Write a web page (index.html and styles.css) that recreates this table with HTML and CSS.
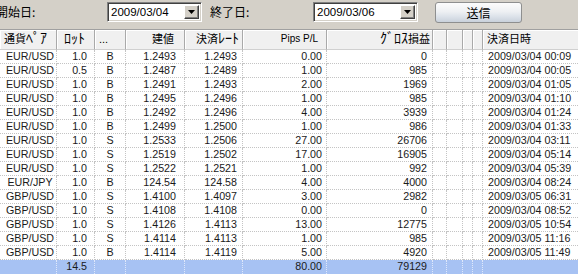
FILE: index.html
```html
<!DOCTYPE html>
<html lang="ja">
<head>
<meta charset="utf-8">
<link rel="stylesheet" href="styles.css">
</head>
<body>
<div class="toolbar">
  <span class="label start">開始日:</span>
  <div class="combo c1"><span class="val">2009/03/04</span><span class="drop"><svg width="7" height="4" viewBox="0 0 7 4"><path d="M0 0H7L3.5 4Z" fill="#000"/></svg></span></div>
  <span class="label end">終了日:</span>
  <div class="combo c2"><span class="val">2009/03/06</span><span class="drop"><svg width="7" height="4" viewBox="0 0 7 4"><path d="M0 0H7L3.5 4Z" fill="#000"/></svg></span></div>
  <button class="send">送信</button>
</div>
<div class="grid">
  <div class="row head">
    <div class="h l">通貨<span class="hk">ﾍﾟｱ</span></div><div class="h l2"><span class="hk">ﾛｯﾄ</span></div><div class="h l">...</div><div class="h r r-open">建値</div><div class="h r r-close">決済<span class="hk">ﾚｰﾄ</span></div><div class="h r r-pips">Pips P/L</div><div class="h r r-gross"><span class="hk">ｸﾞﾛｽ</span>損益</div><div class="h"></div><div class="h"></div><div class="h"></div><div class="h"></div><div class="h l">決済日時</div>
  </div>
  <div class="row"><div class="c pair">EUR/USD</div><div class="c lot">1.0</div><div class="c side">B</div><div class="c open">1.2493</div><div class="c close">1.2493</div><div class="c pips">0.00</div><div class="c gross">0</div><div class="c"></div><div class="c"></div><div class="c"></div><div class="c"></div><div class="c date">2009/03/04 00:09</div></div>
  <div class="row"><div class="c pair">EUR/USD</div><div class="c lot">0.5</div><div class="c side">B</div><div class="c open">1.2487</div><div class="c close">1.2489</div><div class="c pips">1.00</div><div class="c gross">985</div><div class="c"></div><div class="c"></div><div class="c"></div><div class="c"></div><div class="c date">2009/03/04 00:05</div></div>
  <div class="row"><div class="c pair">EUR/USD</div><div class="c lot">1.0</div><div class="c side">B</div><div class="c open">1.2491</div><div class="c close">1.2493</div><div class="c pips">2.00</div><div class="c gross">1969</div><div class="c"></div><div class="c"></div><div class="c"></div><div class="c"></div><div class="c date">2009/03/04 01:05</div></div>
  <div class="row"><div class="c pair">EUR/USD</div><div class="c lot">1.0</div><div class="c side">B</div><div class="c open">1.2495</div><div class="c close">1.2496</div><div class="c pips">1.00</div><div class="c gross">985</div><div class="c"></div><div class="c"></div><div class="c"></div><div class="c"></div><div class="c date">2009/03/04 01:10</div></div>
  <div class="row"><div class="c pair">EUR/USD</div><div class="c lot">1.0</div><div class="c side">B</div><div class="c open">1.2492</div><div class="c close">1.2496</div><div class="c pips">4.00</div><div class="c gross">3939</div><div class="c"></div><div class="c"></div><div class="c"></div><div class="c"></div><div class="c date">2009/03/04 01:24</div></div>
  <div class="row"><div class="c pair">EUR/USD</div><div class="c lot">1.0</div><div class="c side">B</div><div class="c open">1.2499</div><div class="c close">1.2500</div><div class="c pips">1.00</div><div class="c gross">986</div><div class="c"></div><div class="c"></div><div class="c"></div><div class="c"></div><div class="c date">2009/03/04 01:33</div></div>
  <div class="row"><div class="c pair">EUR/USD</div><div class="c lot">1.0</div><div class="c side">S</div><div class="c open">1.2533</div><div class="c close">1.2506</div><div class="c pips">27.00</div><div class="c gross">26706</div><div class="c"></div><div class="c"></div><div class="c"></div><div class="c"></div><div class="c date">2009/03/04 03:11</div></div>
  <div class="row"><div class="c pair">EUR/USD</div><div class="c lot">1.0</div><div class="c side">S</div><div class="c open">1.2519</div><div class="c close">1.2502</div><div class="c pips">17.00</div><div class="c gross">16905</div><div class="c"></div><div class="c"></div><div class="c"></div><div class="c"></div><div class="c date">2009/03/04 05:14</div></div>
  <div class="row"><div class="c pair">EUR/USD</div><div class="c lot">1.0</div><div class="c side">S</div><div class="c open">1.2522</div><div class="c close">1.2521</div><div class="c pips">1.00</div><div class="c gross">992</div><div class="c"></div><div class="c"></div><div class="c"></div><div class="c"></div><div class="c date">2009/03/04 05:39</div></div>
  <div class="row"><div class="c pair">EUR/JPY</div><div class="c lot">1.0</div><div class="c side">B</div><div class="c open">124.54</div><div class="c close">124.58</div><div class="c pips">4.00</div><div class="c gross">4000</div><div class="c"></div><div class="c"></div><div class="c"></div><div class="c"></div><div class="c date">2009/03/04 08:24</div></div>
  <div class="row"><div class="c pair">GBP/USD</div><div class="c lot">1.0</div><div class="c side">S</div><div class="c open">1.4100</div><div class="c close">1.4097</div><div class="c pips">3.00</div><div class="c gross">2982</div><div class="c"></div><div class="c"></div><div class="c"></div><div class="c"></div><div class="c date">2009/03/05 06:31</div></div>
  <div class="row"><div class="c pair">GBP/USD</div><div class="c lot">1.0</div><div class="c side">S</div><div class="c open">1.4108</div><div class="c close">1.4108</div><div class="c pips">0.00</div><div class="c gross">0</div><div class="c"></div><div class="c"></div><div class="c"></div><div class="c"></div><div class="c date">2009/03/04 08:52</div></div>
  <div class="row"><div class="c pair">GBP/USD</div><div class="c lot">1.0</div><div class="c side">S</div><div class="c open">1.4126</div><div class="c close">1.4113</div><div class="c pips">13.00</div><div class="c gross">12775</div><div class="c"></div><div class="c"></div><div class="c"></div><div class="c"></div><div class="c date">2009/03/05 10:54</div></div>
  <div class="row"><div class="c pair">GBP/USD</div><div class="c lot">1.0</div><div class="c side">S</div><div class="c open">1.4114</div><div class="c close">1.4113</div><div class="c pips">1.00</div><div class="c gross">985</div><div class="c"></div><div class="c"></div><div class="c"></div><div class="c"></div><div class="c date">2009/03/05 11:16</div></div>
  <div class="row"><div class="c pair">GBP/USD</div><div class="c lot">1.0</div><div class="c side">B</div><div class="c open">1.4114</div><div class="c close">1.4119</div><div class="c pips">5.00</div><div class="c gross">4920</div><div class="c"></div><div class="c"></div><div class="c"></div><div class="c"></div><div class="c date">2009/03/05 11:49</div></div>
  <div class="row total"><div class="c pair"></div><div class="c lot">14.5</div><div class="c side"></div><div class="c open"></div><div class="c close"></div><div class="c pips">80.00</div><div class="c gross">79129</div><div class="c"></div><div class="c"></div><div class="c"></div><div class="c"></div><div class="c date"></div></div>
</div>
</body>
</html>
```

FILE: styles.css
```css
* { box-sizing: border-box; }
html, body { margin: 0; padding: 0; }
body {
  width: 578px;
  height: 277px;
  overflow: hidden;
  background: #fff;
  font-family: "Liberation Sans", Arial, "Noto Sans CJK JP", sans-serif;
  color: #111;
}
.toolbar {
  display: flex;
  align-items: flex-start;
  height: 30px;
  background: #d4d0c8;
  border-bottom: 1px solid #a0a0a0;
}
.label {
  font-family: "Noto Sans CJK JP", sans-serif;
  font-size: 12px;
  line-height: 14px;
  margin-top: 5px;
  color: #000;
}
.label.start { margin-left: -4px; width: 111px; }
.label.end { margin-left: 8px; width: 103px; }
.combo {
  display: flex;
  align-items: stretch;
  height: 20px;
  margin-top: 2px;
  background: #fff;
  border: 1px solid;
  border-color: #808080 #fff #fff #808080;
  box-shadow: inset 1px 1px 0 #404040, inset -1px -1px 0 #d4d0c8;
  padding: 2px;
}
.c1 { width: 95px; }
.c2 { width: 105px; }
.val {
  flex: 1;
  font-size: 11.5px;
  line-height: 14px;
  padding-left: 1px;
  color: #000;
}
.drop {
  width: 15px;
  display: flex;
  align-items: center;
  justify-content: center;
  background: #d4d0c8;
  border: 1px solid;
  border-color: #fff #404040 #404040 #fff;
  box-shadow: inset -1px -1px 0 #808080;
}
.send {
  margin-left: 17px;
  margin-top: 2px;
  width: 87px;
  height: 21px;
  border: 1px solid #8e8f8f;
  border-radius: 3px;
  background: linear-gradient(#fcfcfc 0%, #eef0f3 45%, #dde3ea 70%, #c9d1db 100%);
  font-family: "Noto Sans CJK JP", sans-serif;
  font-size: 12px;
  line-height: 17px;
  color: #000;
  padding: 0;
}
.grid { width: 578px; }
.row {
  display: grid;
  grid-template-columns: 57px 38px 31px 59px 58px 84px 106px 14px 16px 10px 10px 95px;
  height: 14px;
}
.row.head { height: 20px; }
.h {
  height: 20px;
  background: #f0f0f0;
  border-right: 1px solid #a9a9a9;
  border-bottom: 1px solid #d0d0d0;
  box-shadow: inset 1px 1px 0 #fff;
  font-family: "Liberation Sans", Arial, "Noto Sans CJK JP", sans-serif;
  font-size: 11px;
  line-height: 18px;
  color: #000;
  white-space: nowrap;
  overflow: hidden;
}
.hk { font-size: 14px; line-height: 10px; }
.h.l { text-align: left; padding-left: 4px; }
.h.l2 { text-align: left; padding-left: 7px; }
.h.r { text-align: right; padding-right: 3px; }
.h.r-open { padding-right: 10px; }
.h.r-close { padding-right: 3px; }
.h.r-pips { padding-right: 8px; font-size: 10px; }
.h.r-gross { padding-right: 2px; }
.h:last-child { border-right: none; }
.c {
  height: 14px;
  border-right: 1px dotted #c4c4c4;
  border-bottom: 1px dotted #c4c4c4;
  font-size: 10.7px;
  line-height: 13px;
  white-space: nowrap;
  overflow: hidden;
  color: #1a1a1a;
}
.c:last-child { border-right: none; }
.pair { text-align: center; padding-left: 4px; }
.lot { text-align: right; padding-right: 7px; }
.side { text-align: center; }
.open { text-align: right; padding-right: 8px; }
.close { text-align: right; padding-right: 5px; }
.pips { text-align: right; padding-right: 4px; }
.gross { text-align: right; padding-right: 5px; }
.date { text-align: left; padding-left: 5px; }
.total .c {
  background: #a7c2f3;
  border-right-color: #dfe8fa;
  border-bottom: none;
}
```
